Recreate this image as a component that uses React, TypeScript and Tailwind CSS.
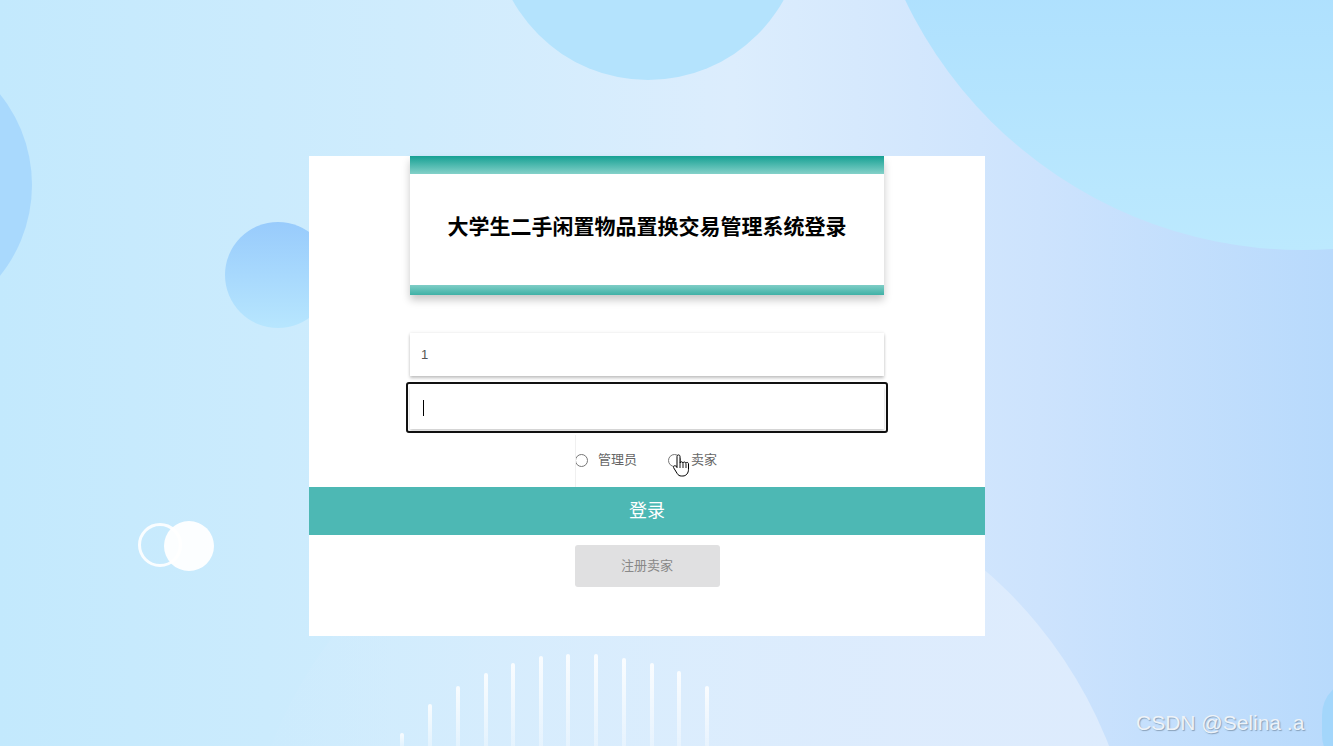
import React from "react";

const bars: { x: number; top: number }[] = [
  { x: 400, top: 733 },
  { x: 428, top: 704 },
  { x: 456, top: 686 },
  { x: 484, top: 673 },
  { x: 511, top: 663 },
  { x: 539, top: 656 },
  { x: 566, top: 654 },
  { x: 594, top: 654 },
  { x: 622, top: 658 },
  { x: 650, top: 663 },
  { x: 677, top: 671 },
  { x: 705, top: 686 },
];

function Radio() {
  return (
    <span className="inline-block w-[13px] h-[13px] rounded-full border border-[#767676] bg-white" />
  );
}

function HandCursor() {
  return (
    <svg width="20" height="24" viewBox="0 0 20 24" className="absolute left-[672px] top-[454px]">
      <path
        d="M5 2.5c0-1 .7-1.6 1.5-1.6S8 1.5 8 2.5V9c.2-.8.8-1.2 1.5-1.2s1.3.5 1.4 1.3c.2-.7.8-1.1 1.5-1.1.8 0 1.4.6 1.4 1.4.2-.6.7-1 1.3-1 .8 0 1.4.7 1.4 1.5v5.5c0 3.5-2.2 6.6-5.6 6.6H9.3c-1.8 0-3-.8-4-2.3L1.8 14c-.5-.8-.3-1.7.4-2.1.7-.4 1.5-.2 2 .5L5 13.6V2.5z"
        fill="#fff"
        stroke="#000"
        strokeWidth="1"
        strokeLinejoin="round"
      />
      <path d="M8 9v5M11 9.2v4.8M14 9.8v4.2" stroke="#000" strokeWidth="0.9" fill="none" />
    </svg>
  );
}

export default function App() {
  return (
    <div
      className="relative w-full h-[746px] overflow-hidden"
      style={{ fontFamily: '"Liberation Sans", "Noto Sans CJK SC", sans-serif' }}
    >
      {/* background base */}
      <div className="absolute inset-0 bg-[linear-gradient(90deg,#c3e9fd_0%,#cfecfd_30%,#dcedfd_55%,#cde3fd_78%,#b8dafc_100%)]" />
      {/* bottom lighter ellipse */}
      <div className="absolute left-[240px] top-[460px] w-[900px] h-[900px] rounded-full bg-[linear-gradient(90deg,rgba(214,238,253,0)_0%,rgba(218,237,253,0.6)_40%,rgba(222,236,253,0.95)_75%)]" />
      {/* top center blob */}
      <div className="absolute left-[493px] top-[-230px] w-[310px] h-[310px] rounded-full bg-[#b4e3fd]" />
      {/* top right blob */}
      <div className="absolute left-[862px] top-[-650px] w-[880px] h-[900px] rounded-full bg-[linear-gradient(180deg,#aee0fe_70%,#bce9fe_100%)]" />
      {/* left blob */}
      <div className="absolute left-[-300px] top-[40px] w-[332px] h-[290px] rounded-full bg-[#a9d9fd]" />
      {/* bottom right darker */}
      <div className="absolute left-[1322px] top-[680px] w-[70px] h-[90px] rounded-full bg-[#a3d6fb]" />
      {/* small circle */}
      <div className="absolute left-[225px] top-[222px] w-[106px] h-[106px] rounded-full bg-[linear-gradient(180deg,#98cbfc,#b7e6fe)]" />
      {/* ring + dot */}
      <div className="absolute left-[138px] top-[523px] w-[44px] h-[44px] rounded-full border-[3px] border-white/90" />
      <div className="absolute left-[164px] top-[521px] w-[50px] h-[50px] rounded-full bg-white/95" />
      {/* bars */}
      {bars.map((b) => (
        <div
          key={b.x}
          className="absolute w-[4px] rounded-t-full bg-[linear-gradient(180deg,rgba(255,255,255,0.85),rgba(255,255,255,0.35))]"
          style={{ left: b.x, top: b.top, height: 746 - b.top }}
        />
      ))}

      {/* content */}
      <div className="relative flex pt-[156px] pl-[309px]">
        <div className="w-[676px] h-[480px] bg-white flex flex-col items-center">
          {/* header */}
          <div className="w-[474px] flex flex-col shadow-[0_5px_8px_rgba(0,0,0,0.22)]">
            <div className="h-[18px] bg-[linear-gradient(180deg,#16a093,#84d1c9)]" />
            <div className="h-[111px] bg-white flex items-center justify-center pb-[7px]">
              <span
                className="text-[21px] font-bold text-black"
                style={{ fontFamily: '"Noto Sans CJK SC", sans-serif' }}
              >
                大学生二手闲置物品置换交易管理系统登录
              </span>
            </div>
            <div className="h-[10px] bg-[linear-gradient(180deg,#7fcdc6,#3fb1a6)]" />
          </div>

          {/* input 1 */}
          <div className="mt-[38px] w-[474px] h-[43px] bg-white shadow-[0_2px_3px_rgba(0,0,0,0.25),0_-1px_3px_rgba(0,0,0,0.05)] flex items-center pl-[11px] text-[13px] text-[#555]">
            1
          </div>
          {/* input 2 focused */}
          <div className="mt-[6px] w-[482px] h-[51px] border-2 border-[#111] rounded-[3px] p-[2px]">
            <div className="w-full h-full bg-white shadow-[0_2px_3px_rgba(0,0,0,0.2)] flex items-center pl-[13px]">
              <span className="w-[1px] h-[16px] bg-black" />
            </div>
          </div>

          {/* radios */}
          <div className="relative w-[676px] h-[54px] flex items-center justify-center">
            <div className="absolute left-[266px] top-[2px] w-px h-[52px] bg-[#f0f0f0]" />
            <label className="flex items-center gap-[10px] text-[13px] text-[#666] -ml-[2px]">
              <Radio />
              管理员
            </label>
            <label className="flex items-center gap-[10px] text-[13px] text-[#666] ml-[31px]">
              <Radio />
              卖家
            </label>
          </div>

          {/* login */}
          <div className="w-[676px] h-[48px] bg-[#4db8b4] flex items-center justify-center text-white text-[18px]">
            登录
          </div>

          {/* register */}
          <div className="mt-[10px] w-[145px] h-[42px] rounded-[3px] bg-[#e0e0e1] flex items-center justify-center text-[13px] text-[#888]">
            注册卖家
          </div>
        </div>
      </div>

      <HandCursor />

      {/* watermark */}
      <div
        className="absolute left-[1136px] top-[710px] text-[21px] text-[#eef3f8] leading-[26px]"
        style={{ fontFamily: '"Liberation Sans", sans-serif', textShadow: "1px 1px 1px rgba(90,110,130,0.55)" }}
      >
        CSDN @Selina .a
      </div>
    </div>
  );
}
